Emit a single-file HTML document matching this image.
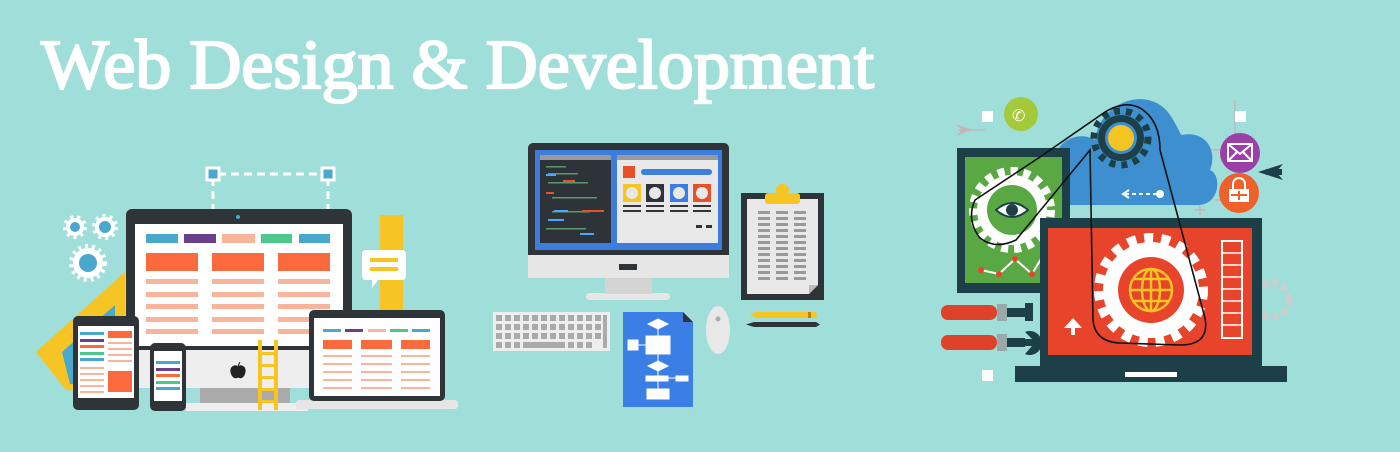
<!DOCTYPE html>
<html><head><meta charset="utf-8"><style>
html,body{margin:0;padding:0;background:#a0ded9;}
svg{display:block}
</style></head><body>
<svg width="1400" height="452" viewBox="0 0 1400 452" xmlns="http://www.w3.org/2000/svg">
<rect width="1400" height="452" fill="#a0ded9"/>
<text x="41" y="88" font-family="Liberation Serif, serif" font-size="70" fill="#fff" stroke="#fff" stroke-width="2.2" textLength="833" lengthAdjust="spacingAndGlyphs">Web Design &amp; Development</text>

<!-- LEFT -->
<g>
<path d="M218 174H323 M213 178V210 M328 178V210" stroke="#fff" stroke-width="3" stroke-dasharray="8 5" fill="none"/>
<rect x="207" y="168" width="12" height="12" fill="#4aa8cf" stroke="#fff" stroke-width="3"/>
<rect x="322" y="168" width="12" height="12" fill="#4aa8cf" stroke="#fff" stroke-width="3"/>
<g fill="#fff">
<circle cx="75" cy="227" r="9"/><circle cx="105" cy="227" r="10"/><circle cx="88" cy="263" r="15"/>
</g>
<g fill="none" stroke="#fff" stroke-width="4" stroke-dasharray="3 4">
<circle cx="75" cy="227" r="10"/><circle cx="105" cy="227" r="11"/><circle cx="88" cy="263" r="17"/>
</g>
<circle cx="75" cy="227" r="5" fill="#4aa8cf"/><circle cx="105" cy="227" r="6" fill="#4aa8cf"/><circle cx="88" cy="263" r="9" fill="#4aa8cf"/>
<!-- triangle ruler -->
<polygon points="36,352 125,272 125,392 66,390" fill="#f6c423"/>
<polygon points="62,352 115,305 115,385 70,384" fill="#4aa8cf"/>
<rect x="380" y="215" width="23" height="95" fill="#f6c423"/>
<!-- monitor -->
<rect x="200" y="386" width="90" height="20" fill="#aaa"/>
<rect x="186" y="403" width="122" height="8" fill="#eee"/>
<rect x="126" y="209" width="226" height="150" rx="6" fill="#2f3439"/>
<rect x="126" y="350" width="226" height="38" fill="#eeeeee"/>
<rect x="135" y="224" width="208" height="122" fill="#fff"/>
<circle cx="238" cy="217" r="2" fill="#4aa8cf"/>
<path d="M238 367c-3-3-8 0-7 5c1 5 4 7 7 5c3 2 6 0 7-5c1-5-4-8-7-5z M238 366l2-4" fill="#222" stroke="#222" stroke-width="1"/>
<g>
<rect x="146" y="234" width="32" height="9" fill="#4aa8cf"/><rect x="184" y="234" width="32" height="9" fill="#6a3f8c"/><rect x="222" y="234" width="33" height="9" fill="#f9b59c"/><rect x="261" y="234" width="31" height="9" fill="#4dc88c"/><rect x="299" y="234" width="31" height="9" fill="#4aa8cf"/>
<rect x="146" y="253" width="52" height="18" fill="#fb6a3c"/><rect x="212" y="253" width="52" height="18" fill="#fb6a3c"/><rect x="278" y="253" width="52" height="18" fill="#fb6a3c"/>
<g fill="#f9b59c">
<rect x="146" y="279" width="52" height="5"/><rect x="212" y="279" width="52" height="5"/><rect x="278" y="279" width="52" height="5"/>
<rect x="146" y="292" width="52" height="5"/><rect x="212" y="292" width="52" height="5"/><rect x="278" y="292" width="52" height="5"/>
<rect x="146" y="304" width="52" height="5"/><rect x="212" y="304" width="52" height="5"/><rect x="278" y="304" width="52" height="5"/>
<rect x="146" y="317" width="52" height="5"/><rect x="212" y="317" width="52" height="5"/><rect x="278" y="317" width="52" height="5"/>
<rect x="146" y="329" width="52" height="5"/><rect x="212" y="329" width="52" height="5"/><rect x="278" y="329" width="52" height="5"/>
</g></g>
<path d="M366 250H402a4 4 0 0 1 4 4V276a4 4 0 0 1-4 4H378L372 288V280H366a4 4 0 0 1-4-4V254a4 4 0 0 1 4-4Z" fill="#fff"/>
<rect x="370" y="258" width="28" height="4" fill="#f6c423"/><rect x="370" y="267" width="28" height="4" fill="#f6c423"/>
<g fill="#f6c423"><rect x="258" y="340" width="4" height="70"/><rect x="274" y="340" width="4" height="70"/>
<rect x="258" y="352" width="20" height="3"/><rect x="258" y="364" width="20" height="3"/><rect x="258" y="376" width="20" height="3"/><rect x="258" y="388" width="20" height="3"/><rect x="258" y="400" width="20" height="3"/></g>
<rect x="73" y="316" width="66" height="94" rx="5" fill="#2f3439"/>
<rect x="78" y="326" width="56" height="72" fill="#fff"/>
<rect x="80" y="332" width="24" height="3" fill="#4aa8cf"/><rect x="80" y="339" width="24" height="3" fill="#6a3f8c"/><rect x="80" y="345" width="24" height="3" fill="#fb6a3c"/><rect x="80" y="352" width="24" height="3" fill="#4dc88c"/><rect x="80" y="358" width="24" height="3" fill="#4aa8cf"/>
<rect x="108" y="331" width="24" height="7" fill="#fb6a3c"/><rect x="108" y="371" width="24" height="21" fill="#fb6a3c"/>
<g fill="#f9b59c"><rect x="108" y="342" width="24" height="2"/><rect x="108" y="348" width="24" height="2"/><rect x="108" y="354" width="24" height="2"/><rect x="108" y="360" width="24" height="2"/><rect x="80" y="367" width="24" height="2"/><rect x="80" y="373" width="24" height="2"/><rect x="80" y="379" width="24" height="2"/><rect x="80" y="385" width="24" height="2"/><rect x="80" y="391" width="24" height="2"/></g>
<rect x="150" y="343" width="36" height="68" rx="5" fill="#2f3439"/>
<rect x="154" y="351" width="28" height="50" fill="#fff"/>
<rect x="156" y="361" width="24" height="3" fill="#4aa8cf"/><rect x="156" y="368" width="24" height="3" fill="#6a3f8c"/><rect x="156" y="374" width="24" height="3" fill="#fb6a3c"/><rect x="156" y="381" width="24" height="3" fill="#4dc88c"/><rect x="156" y="387" width="24" height="3" fill="#4aa8cf"/>
<rect x="296" y="400" width="162" height="9" rx="3" fill="#e6e6e6"/>
<rect x="309" y="310" width="136" height="91" rx="5" fill="#2f3439"/>
<rect x="314" y="318" width="126" height="78" fill="#fff"/>
<rect x="323" y="329" width="18" height="3" fill="#4aa8cf"/><rect x="345" y="329" width="18" height="3" fill="#6a3f8c"/><rect x="368" y="329" width="18" height="3" fill="#f9b59c"/><rect x="390" y="329" width="18" height="3" fill="#4dc88c"/><rect x="412" y="329" width="18" height="3" fill="#4aa8cf"/>
<rect x="323" y="340" width="29" height="9" fill="#fb6a3c"/><rect x="361" y="340" width="31" height="9" fill="#fb6a3c"/><rect x="401" y="340" width="29" height="9" fill="#fb6a3c"/>
<g fill="#f9b59c"><rect x="323" y="355" width="29" height="2"/><rect x="361" y="355" width="31" height="2"/><rect x="401" y="355" width="29" height="2"/><rect x="323" y="363" width="29" height="2"/><rect x="361" y="363" width="31" height="2"/><rect x="401" y="363" width="29" height="2"/><rect x="323" y="371" width="29" height="2"/><rect x="361" y="371" width="31" height="2"/><rect x="401" y="371" width="29" height="2"/><rect x="323" y="379" width="29" height="2"/><rect x="361" y="379" width="31" height="2"/><rect x="401" y="379" width="29" height="2"/><rect x="323" y="387" width="29" height="2"/><rect x="361" y="387" width="31" height="2"/><rect x="401" y="387" width="29" height="2"/></g>
</g>

<!-- MIDDLE -->
<g>
<rect x="586" y="293" width="84" height="7" rx="3" fill="#e6e6e6"/>
<rect x="605" y="278" width="47" height="16" fill="#d4d4d4"/>
<rect x="528" y="143" width="201" height="135" rx="5" fill="#2f3439"/>
<rect x="528" y="255" width="201" height="23" fill="#e6e6e6"/>
<rect x="619" y="264" width="18" height="6" fill="#2f3439"/>
<rect x="535" y="150" width="187" height="100" fill="#3c7de0"/>
<rect x="540" y="155" width="71" height="88" fill="#2d3338"/>
<rect x="540" y="155" width="71" height="5" fill="#999"/>
<g fill="#8fa" opacity="0.5"><rect x="546" y="166" width="20" height="1.5"/><rect x="548" y="173" width="30" height="1.5"/><rect x="548" y="182" width="40" height="1.5"/><rect x="552" y="197" width="45" height="1.5"/><rect x="552" y="211" width="38" height="1.5"/><rect x="546" y="228" width="40" height="1.5"/></g>
<rect x="546" y="174" width="10" height="2" fill="#4aa8ff"/><rect x="563" y="180" width="12" height="2" fill="#e8502a"/><rect x="546" y="192" width="8" height="2" fill="#e8502a"/><rect x="554" y="210" width="14" height="2" fill="#4aa8ff"/><rect x="582" y="210" width="22" height="2" fill="#e8502a"/><rect x="548" y="219" width="16" height="2" fill="#4aa8ff"/><rect x="580" y="233" width="14" height="2" fill="#4aa8ff"/>
<rect x="617" y="155" width="101" height="88" fill="#e8e8e8"/>
<rect x="617" y="155" width="101" height="5" fill="#999"/>
<rect x="623" y="166" width="12" height="12" fill="#e8502a"/>
<rect x="641" y="169" width="71" height="6" rx="3" fill="#3c7de0"/>
<rect x="623" y="184" width="18" height="18" fill="#f6c423"/><circle cx="632" cy="193" r="6" fill="#e8e8e8"/>
<rect x="646" y="184" width="18" height="18" fill="#2d3338"/><circle cx="655" cy="193" r="6" fill="#e8e8e8"/>
<rect x="670" y="184" width="18" height="18" fill="#3c7de0"/><circle cx="679" cy="193" r="6" fill="#e8e8e8"/>
<rect x="693" y="184" width="18" height="18" fill="#e8502a"/><circle cx="702" cy="193" r="6" fill="#e8e8e8"/>
<g fill="#333"><rect x="623" y="205" width="18" height="2"/><rect x="623" y="210" width="18" height="2"/><rect x="646" y="205" width="18" height="2"/><rect x="646" y="210" width="18" height="2"/><rect x="670" y="205" width="18" height="2"/><rect x="670" y="210" width="18" height="2"/><rect x="693" y="205" width="18" height="2"/><rect x="693" y="210" width="18" height="2"/><rect x="696" y="225" width="6" height="3"/><rect x="706" y="225" width="6" height="3"/></g>
<rect x="741" y="193" width="83" height="107" fill="#2f3439"/>
<path d="M747 199H818V285L809 294H747Z" fill="#e8e8e8"/>
<path d="M818 285L809 294V285Z" fill="#bbb"/>
<rect x="765" y="193" width="35" height="11" rx="3" fill="#f6c423"/><rect x="776" y="184" width="13" height="12" rx="6" fill="#f6c423"/>
<g fill="#999" id="crow">
<rect x="758" y="211" width="12" height="3"/><rect x="776" y="211" width="12" height="3"/><rect x="794" y="211" width="12" height="3"/></g>
<use href="#crow" y="6"/><use href="#crow" y="12"/><use href="#crow" y="18"/><use href="#crow" y="24"/><use href="#crow" y="30"/><use href="#crow" y="36"/><use href="#crow" y="42"/><use href="#crow" y="48"/><use href="#crow" y="54"/><use href="#crow" y="60"/><use href="#crow" y="66"/>
<rect x="493" y="312" width="117" height="39" fill="#eeeeee"/>
<g fill="#aaa" id="krow"><rect x="496" y="315" width="6" height="6"/><rect x="505" y="315" width="6" height="6"/><rect x="514" y="315" width="6" height="6"/><rect x="523" y="315" width="6" height="6"/><rect x="532" y="315" width="6" height="6"/><rect x="541" y="315" width="6" height="6"/><rect x="550" y="315" width="6" height="6"/><rect x="559" y="315" width="6" height="6"/><rect x="568" y="315" width="6" height="6"/><rect x="577" y="315" width="6" height="6"/><rect x="586" y="315" width="6" height="6"/><rect x="595" y="315" width="6" height="6"/></g>
<use href="#krow" y="9"/><use href="#krow" y="18"/>
<g fill="#aaa"><rect x="496" y="342" width="6" height="6"/><rect x="505" y="342" width="6" height="6"/><rect x="514" y="342" width="6" height="6"/><rect x="523" y="342" width="42" height="6"/><rect x="568" y="342" width="6" height="6"/><rect x="577" y="342" width="6" height="6"/><rect x="586" y="342" width="6" height="6"/><rect x="603" y="315" width="4" height="33"/></g>
<path d="M623 312H683L693 322V407H623Z" fill="#3b7ee6"/>
<path d="M683 312L693 322H683Z" fill="#2f3439"/>
<g fill="#fff" stroke="#fff" stroke-width="1">
<path d="M658 319L668 324L658 329L648 324Z"/><line x1="658" y1="329" x2="658" y2="336"/>
<rect x="646" y="336" width="24" height="18"/><rect x="628" y="340" width="10" height="10"/><line x1="638" y1="345" x2="646" y2="345"/>
<line x1="658" y1="354" x2="658" y2="361"/><path d="M658 361L668 366L658 371L648 366Z"/><line x1="658" y1="371" x2="658" y2="376"/>
<rect x="646" y="376" width="22" height="5"/><rect x="676" y="376" width="12" height="5"/><line x1="668" y1="378" x2="676" y2="378"/>
<line x1="658" y1="381" x2="658" y2="389"/><rect x="647" y="389" width="22" height="10"/></g>
<ellipse cx="718" cy="330" rx="12" ry="24" fill="#e8e8e8"/><circle cx="718" cy="319" r="2.5" fill="#aaa"/>
<path d="M750 314.5L756 312H814a3 3 0 0 1 0 6H756Z" fill="#f6c423"/><rect x="808" y="312" width="3" height="6" fill="#c77a00"/>
<path d="M746 324.5L754 322H816L820 324.5L816 327H754Z" fill="#2f3439"/>
</g>

<!-- RIGHT -->
<g>
<g stroke="#c8b3b8" stroke-width="2" fill="none" opacity="0.7"><path d="M958 130H985 M1235 150V100 M1195 150H1240 M1215 200H1232"/><path d="M1200 205V215 M1195 210H1205"/></g>
<polygon points="956,124 972,130 956,136 962,130" fill="#c8b3b8"/>
<rect x="982" y="111" width="11" height="11" fill="#fff"/><rect x="1235" y="111" width="11" height="11" fill="#fff"/><rect x="982" y="370" width="11" height="11" fill="#fff"/>
<circle cx="1272" cy="300" r="17" fill="none" stroke="#d9c9c8" stroke-width="7" stroke-dasharray="6 4" opacity="0.7"/>
<path d="M1053 205C1035 205 1030 175 1055 170C1050 140 1080 130 1095 140C1100 100 1150 85 1170 115C1180 130 1180 135 1182 135C1205 130 1218 150 1210 170C1222 175 1220 205 1198 205Z" fill="#3e8fd0"/>
<path d="M1125 194H1160" stroke="#fff" stroke-width="2" stroke-dasharray="4 3"/><circle cx="1160" cy="194" r="4" fill="#fff"/><path d="M1129 190L1123 194L1129 198" stroke="#fff" stroke-width="2" fill="none"/>
<circle cx="1021" cy="114" r="17" fill="#a4c93a"/><text x="1012" y="121" font-size="16" fill="#fff" font-family="DejaVu Sans">✆</text>
<circle cx="1240" cy="153" r="20" fill="#9c3fa6"/><rect x="1228" y="144" width="24" height="17" fill="none" stroke="#fff" stroke-width="2"/><path d="M1228 144L1240 154L1252 144 M1228 161L1237 152 M1252 161L1243 152" stroke="#fff" stroke-width="2" fill="none"/>
<circle cx="1239" cy="193" r="20" fill="#f0602a"/><rect x="1229" y="189" width="20" height="13" fill="#fff"/><path d="M1233 189V184a6 6 0 0 1 12 0V189" stroke="#fff" stroke-width="2" fill="none"/><path d="M1239 191V200 M1231 195H1247" stroke="#f0602a" stroke-width="2"/>
<polygon points="1258,172 1283,164 1276,172 1283,180" fill="#1d4048"/><rect x="1266" y="169" width="16" height="6" fill="#1d4048"/>
<circle cx="1121" cy="138" r="23" fill="#1d4048"/><circle cx="1121" cy="138" r="27" fill="none" stroke="#1d4048" stroke-width="7" stroke-dasharray="6 6"/>
<circle cx="1121" cy="138" r="16" fill="#3e8fd0"/><circle cx="1121" cy="138" r="13" fill="#f6c423"/>
<rect x="957" y="148" width="113" height="145" fill="#1d4048"/>
<rect x="965" y="157" width="97" height="126" fill="#5aa844"/>
<circle cx="1012" cy="210" r="35" fill="#fff"/><circle cx="1012" cy="210" r="39" fill="none" stroke="#fff" stroke-width="8" stroke-dasharray="7 6"/>
<circle cx="1012" cy="210" r="25" fill="#5aa844"/>
<path d="M996 210Q1012 196 1028 210Q1012 224 996 210Z" fill="#fff" stroke="#1d4048" stroke-width="2"/><circle cx="1012" cy="210" r="6" fill="#1d4048"/>
<polyline points="981,270 999,274 1015,259 1032,274 1047,249" fill="none" stroke="#fff" stroke-width="2"/>
<g fill="#e8442c"><circle cx="981" cy="270" r="3"/><circle cx="999" cy="274" r="3"/><circle cx="1015" cy="259" r="3"/><circle cx="1032" cy="274" r="3"/><circle cx="1047" cy="249" r="3"/></g>
<rect x="1015" y="366" width="272" height="16" fill="#1d4048"/>
<rect x="1125" y="372" width="52" height="5" fill="#fff"/>
<rect x="1040" y="218" width="222" height="148" fill="#1d4048"/>
<rect x="1048" y="228" width="204" height="127" fill="#e8442c"/>
<circle cx="1151" cy="290" r="48" fill="#fff"/><circle cx="1151" cy="290" r="52" fill="none" stroke="#fff" stroke-width="10" stroke-dasharray="9 8"/>
<circle cx="1151" cy="290" r="33" fill="#e8442c"/>
<g fill="none" stroke="#f6c423" stroke-width="2.5"><circle cx="1151" cy="290" r="21"/><ellipse cx="1151" cy="290" rx="9" ry="21"/><path d="M1130 290H1172 M1151 269V311 M1134 279H1168 M1134 301H1168"/></g>
<rect x="1222" y="241" width="20" height="97" fill="none" stroke="#fff" stroke-width="2"/>
<g stroke="#fff" stroke-width="1.5"><path d="M1222 253H1242M1222 265H1242M1222 277H1242M1222 289H1242M1222 301H1242M1222 313H1242M1222 325H1242"/></g>
<path d="M1071 335V328H1064L1073 318L1082 328H1075V335Z" fill="#fff"/>
<path d="M1040 157L1105 112Q1125 100 1140 108Q1160 120 1160 150L1205 318Q1210 345 1180 345L1120 343Q1095 342 1093 320L1090 150L1016 240Q995 250 980 238Q966 220 975 200Z" fill="none" stroke="#111" stroke-width="1.6"/>
<rect x="941" y="305" width="56" height="15" rx="7" fill="#e0412b"/><rect x="997" y="304" width="10" height="17" fill="#9aa"/><rect x="1007" y="308" width="26" height="9" fill="#1d4048"/><rect x="1025" y="303" width="8" height="18" fill="#1d4048"/>
<rect x="941" y="335" width="56" height="15" rx="7" fill="#e0412b"/><rect x="997" y="334" width="10" height="17" fill="#9aa"/><rect x="1007" y="338" width="18" height="9" fill="#1d4048"/><path d="M1025 332A12 12 0 1 1 1025 354L1032 346H1025V339H1032Z" fill="#1d4048"/>
</g>
</svg>
</body></html>
